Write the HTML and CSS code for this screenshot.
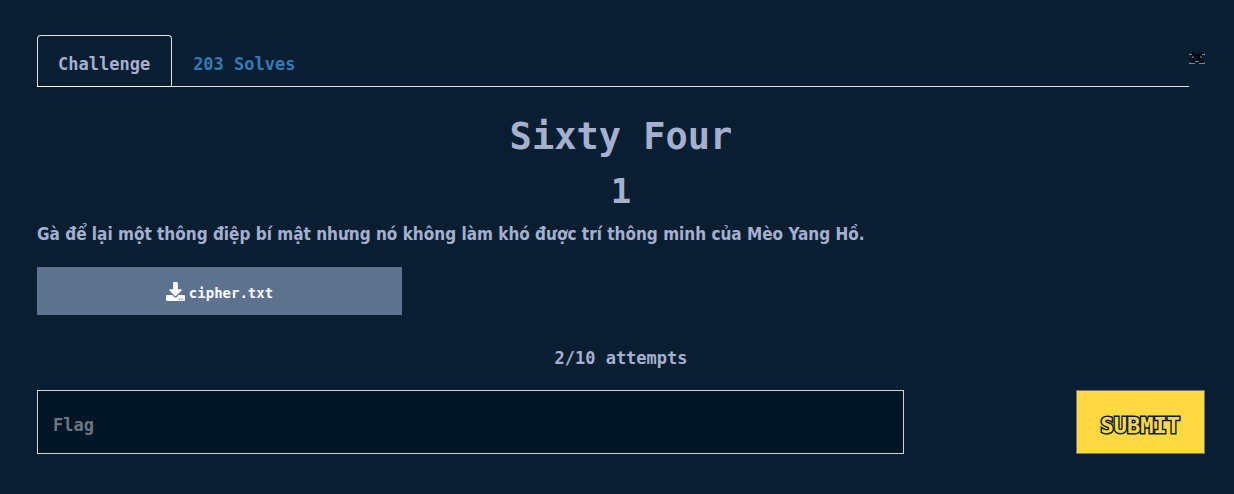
FILE: index.html
```html
<!DOCTYPE html>
<html lang="vi">
<head>
<meta charset="utf-8">
<meta name="viewport" content="width=device-width, initial-scale=1">
<title>Sixty Four</title>
<link rel="stylesheet" href="styles.css">
</head>
<body>
<main class="challenge">
  <header class="top">
    <nav class="tabs">
      <a class="tab tab-active" href="#challenge">Challenge</a>
      <a class="tab" href="#solves">203 Solves</a>
    </nav>
    <button class="close" type="button" aria-label="Close">
      <svg class="close-icon" viewBox="0 0 16 13" shape-rendering="crispEdges" aria-hidden="true">
        <path fill="#020b13" d="M1 0h5v2h4V0h5v3h-2v5h2v3h-5v-1H6v1H1V8h2V3H1z"/>
        <path fill="#7d8790" d="M0 2h3v1H0zM13 2h3v1h-3zM0 11h6v1H0zM10 11h6v1h-6zM6 9h4v1H6z"/>
        <path fill="#46535f" d="M3 4h2v2H3zM11 4h2v2h-2zM0 10h1v1H0zM15 10h1v1h-1zM0 1h1v1H0zM15 1h1v1h-1z"/>
      </svg>
    </button>
  </header>
  <h2 class="title">Sixty Four</h2>
  <h3 class="value">1</h3>
  <p class="description">Gà để lại một thông điệp bí mật nhưng nó không làm khó được trí thông minh của Mèo Yang Hồ.</p>
  <a class="download" href="#cipher.txt">
    <svg class="download-icon" viewBox="0 0 512 512" aria-hidden="true">
      <path fill="currentColor" d="M216 0h80c13.3 0 24 10.700 24 24v168h87.700c17.800 0 26.700 21.500 14.100 34.100L269.700 378.300c-7.500 7.500-19.800 7.500-27.300 0L90.100 226.100c-12.600-12.600-3.700-34.100 14.100-34.100H192V24c0-13.300 10.700-24 24-24zm296 376v112c0 13.300-10.700 24-24 24H24c-13.300 0-24-10.700-24-24V376c0-13.300 10.700-24 24-24h146.700l49 49c20.100 20.100 52.500 20.100 72.600 0l49-49H488c13.300 0 24 10.700 24 24zm-124 88c0-11-9-20-20-20s-20 9-20 20 9 20 20 20 20-9 20-20zm64 0c0-11-9-20-20-20s-20 9-20 20 9 20 20 20 20-9 20-20z"/>
    </svg>
    <span class="download-name">cipher.txt</span>
  </a>
  <p class="attempts">2/10 attempts</p>
  <form class="answer">
    <input class="flag" type="text" name="flag" placeholder="Flag" aria-label="Flag">
    <button class="submit" type="button">SUBMIT</button>
  </form>
</main>
</body>
</html>
```
FILE: styles.css
```css
* {
  box-sizing: border-box;
}

body {
  margin: 0;
  background: #0a1e31;
  color: #a5b0cf;
  font: bold 17px/24px "DejaVu Sans Mono", monospace;
}

.challenge {
  padding: 35px 29px 40px 37px;
}

.top {
  display: flex;
  align-items: flex-start;
}

.tabs {
  display: flex;
  flex: 1;
  border-bottom: 1px solid #dee2e6;
}

.tab {
  margin-bottom: -1px;
  padding: 16px 21px 10px 20px;
  border: 1px solid transparent;
  color: #337ab7;
  text-decoration: none;
}

.tab-active {
  border-color: #dee2e6;
  border-bottom-color: #fff;
  border-radius: 4px 4px 0 0;
  color: #a5b0cf;
}

.close {
  display: flex;
  margin: 17px 0 0;
  padding: 0;
  border: 0;
  background: none;
}

.close-icon {
  width: 16px;
  height: 13px;
}

.title,
.value {
  margin: 0;
  text-align: center;
}

.title {
  padding-top: 24px;
  font-size: 37px;
  line-height: 52px;
}

.value {
  padding-top: 8px;
  font-size: 34px;
  line-height: 40px;
}

.description {
  margin: 11px 0 21px;
  font-family: "DejaVu Sans Condensed", "DejaVu Sans", sans-serif;
}

.download {
  display: flex;
  align-items: center;
  justify-content: center;
  gap: 4px;
  width: 31.25%;
  height: 48px;
  background: #5c728f;
  color: #fff;
  font-size: 14px;
  text-decoration: none;
}

.download-icon {
  width: 19px;
  height: 19px;
}

.download-name {
  padding-top: 4px;
}

.attempts {
  margin: 31px 0 20px;
  text-align: center;
}

.answer {
  display: flex;
  justify-content: space-between;
}

.flag {
  width: 74.25%;
  height: 64px;
  padding: 6px 15px 0;
  border: 1px solid #ced4da;
  border-radius: 0;
  background: #031625;
  color: #a5b0cf;
  font: inherit;
}

.flag::placeholder {
  color: #6c757d;
  opacity: 1;
}

.submit {
  padding: 8px 24px 0;
  border: 1px solid #6c757d;
  background: #ffd942;
  color: #ffd942;
  font: bold 22px/32px "DejaVu Sans Mono", monospace;
  -webkit-text-stroke: 3px #0a1e31;
  paint-order: stroke fill;
}
```
